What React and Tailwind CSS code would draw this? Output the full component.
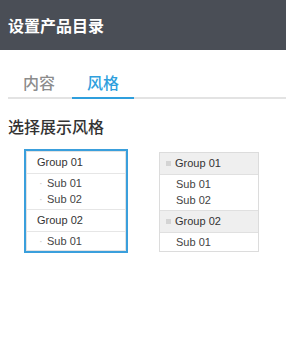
import React from "react";

const cjk = { fontFamily: '"Noto Sans CJK SC", "Noto Sans", sans-serif' };
const latin = { fontFamily: '"Liberation Sans", Arial, sans-serif' };

function LeftPreview() {
  return (
    <div className="border-2 border-[#3a9fdc] bg-white">
      <div className="w-[100px] h-[100px] border border-[#e2e2e2] flex flex-col text-[11px] text-[#333]" style={latin}>
        <div className="h-[22px] border-b border-[#e6e6e6] flex items-center pl-[10px]">Group 01</div>
        <div className="pt-[1px] pb-[2px] border-b border-[#e6e6e6]">
          <div className="h-[16px] leading-[16px] flex items-center pl-[12px] text-[#444]"><span className="text-[#c8c8c8] w-[8px]">·</span>Sub 01</div>
          <div className="h-[16px] leading-[16px] flex items-center pl-[12px] text-[#444]"><span className="text-[#c8c8c8] w-[8px]">·</span>Sub 02</div>
        </div>
        <div className="h-[22px] border-b border-[#e6e6e6] flex items-center pl-[10px]">Group 02</div>
        <div className="pt-[1px]">
          <div className="h-[16px] leading-[16px] flex items-center pl-[12px] text-[#444]"><span className="text-[#c8c8c8] w-[8px]">·</span>Sub 01</div>
        </div>
      </div>
    </div>
  );
}

function RightPreview() {
  return (
    <div className="mt-[3px] w-[100px] h-[100px] border border-[#dcdcdc] bg-white flex flex-col text-[11px] text-[#333]" style={latin}>
      <div className="h-[22px] bg-[#efefef] border-b border-[#e0e0e0] flex items-center pl-[6px]">
        <span className="w-[5px] h-[5px] bg-[#d4d4d4] mr-[4px]" />Group 01
      </div>
      <div className="pt-[1px] pb-[2px] border-b border-[#e0e0e0]">
        <div className="h-[16px] leading-[16px] pl-[16px] text-[#444]">Sub 01</div>
        <div className="h-[16px] leading-[16px] pl-[16px] text-[#444]">Sub 02</div>
      </div>
      <div className="h-[22px] bg-[#efefef] border-b border-[#e0e0e0] flex items-center pl-[6px]">
        <span className="w-[5px] h-[5px] bg-[#d4d4d4] mr-[4px]" />Group 02
      </div>
      <div className="pt-[1px]">
        <div className="h-[16px] leading-[16px] pl-[16px] text-[#444]">Sub 01</div>
      </div>
    </div>
  );
}

export default function App() {
  return (
    <div className="w-[286px] h-[352px] bg-white overflow-hidden" style={cjk}>
      <div className="h-[50px] bg-[#4a4e56] flex items-center pl-2">
        <span className="text-white text-[16px] leading-[16px] font-bold">设置产品目录</span>
      </div>
      <div className="ml-2 mt-4 flex border-b-2 border-[#e3e3e3]">
        <div className="w-[62px] pt-2 pb-[7px] text-center text-[16px] leading-[16px] font-medium text-[#8c8c8c]">内容</div>
        <div className="ml-[2px] w-[62px] pt-2 pb-[7px] -mb-[2px] border-b-2 border-[#2f9fdd] text-center text-[16px] leading-[16px] font-medium text-[#2f9fdd]">风格</div>
      </div>
      <div className="mt-[19px] pl-2 text-[16px] leading-[16px] font-medium text-[#333]">选择展示风格</div>
      <div className="mt-[15px] pl-6 flex items-start gap-[31px]">
        <LeftPreview />
        <RightPreview />
      </div>
    </div>
  );
}
